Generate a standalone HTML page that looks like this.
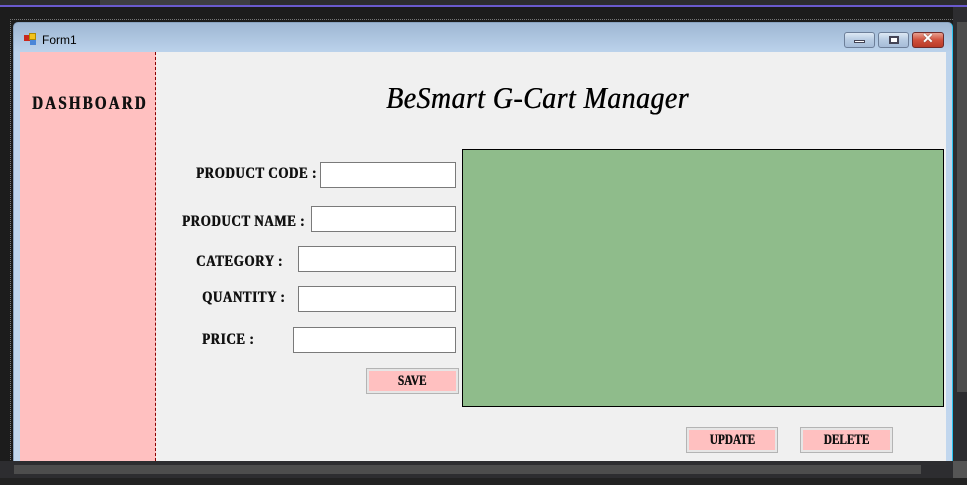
<!DOCTYPE html>
<html><head><meta charset="utf-8">
<style>
*{margin:0;padding:0;box-sizing:border-box}
body{width:967px;height:485px;background:#1c1c1c;position:relative;overflow:hidden;font-family:"Liberation Sans",sans-serif}
.a{position:absolute}
.lbl{position:absolute;font-family:"Liberation Serif",serif;font-weight:bold;font-size:13px;color:#111;transform:scaleY(1.25);transform-origin:left top;white-space:nowrap;letter-spacing:0.6px;text-shadow:0.5px 0 0 #111}
.inp{position:absolute;background:#fff;border:1px solid #7a7a7a}
.btn{position:absolute;border:1px solid #b4b4b4;background:#e6e6e6;padding:2px}
.btn div{background:#ffc0c0;width:100%;height:100%;text-align:center;font-family:"Liberation Serif",serif;font-weight:bold;font-size:15px;line-height:20px;color:#111}
.btn span{display:inline-block;transform:scaleX(0.75);text-shadow:0.5px 0 0 #111}
.cb{position:absolute;top:32px;height:16px;border:1px solid #6d7f99;border-radius:3px;background:linear-gradient(#dde8f4,#b7cbe2 50%,#a6bcd8)}
</style></head><body>
<div class="a" style="left:0;top:0;width:967px;height:5px;background:#2d2d30"></div>
<div class="a" style="left:100px;top:0;width:150px;height:5px;background:#3e3e42"></div>
<div class="a" style="left:0;top:5px;width:967px;height:2px;background:#6a5acd"></div>
<div class="a" style="left:10px;top:19px;width:943px;height:445px;border-top:1px dotted #777;border-left:1px dotted #777"></div>
<div class="a" style="left:13px;top:22px;width:940px;height:440px;background:linear-gradient(#9fb7d3,#bcd3ec 30px,#c2d7ee);border:1px solid #8aa3c0;border-radius:5px 5px 0 0;border-right:1px solid #2ac4f0"></div>
<div class="a" style="left:24px;top:35px;width:7px;height:6px;background:#c9281c"></div>
<div class="a" style="left:29px;top:33px;width:7px;height:7px;background:#f3c21b;border:1px solid #b08a00"></div>
<div class="a" style="left:30px;top:40px;width:6px;height:5px;background:#4a86d8"></div>
<div class="a" style="left:42px;top:33px;font-size:12px;color:#000">Form1</div>
<div class="cb" style="left:844px;width:31px"><div class="a" style="left:9px;top:7px;width:11px;height:3px;background:#fff;border:1px solid #445"></div></div>
<div class="cb" style="left:878px;width:31px"><div class="a" style="left:10px;top:3px;width:10px;height:8px;border:2px solid #445;background:#fff"></div></div>
<div class="cb" style="left:912px;width:32px;background:linear-gradient(#e8a090,#d0503c 50%,#b83a28);border-color:#6e2a2a"><div class="a" style="left:9px;top:-3px;color:#fff;font-weight:bold;font-size:14px;text-shadow:0 0 1px #333">✕</div></div>
<div class="a" style="left:20px;top:52px;width:926px;height:409px;background:#f0f0f0"></div>
<div class="a" style="left:20px;top:52px;width:136px;height:409px;background:#ffc0c0;border-right:1px dashed #8b0000"></div>
<div class="lbl" style="left:32px;top:94px;font-size:15px;letter-spacing:2.2px">DASHBOARD</div>
<div class="a" style="left:386px;top:80px;font-family:'Liberation Serif',cursive;font-style:italic;font-size:31px;color:#000;letter-spacing:0.5px;transform:scaleX(0.9);transform-origin:left;text-shadow:0.5px 0 0 #000">BeSmart G-Cart Manager</div>
<div class="lbl" style="left:196px;top:163px">PRODUCT CODE :</div>
<div class="inp" style="left:320px;top:162px;width:136px;height:26px"></div>
<div class="lbl" style="left:182px;top:211px">PRODUCT NAME :</div>
<div class="inp" style="left:311px;top:206px;width:145px;height:26px"></div>
<div class="lbl" style="left:196px;top:251px">CATEGORY :</div>
<div class="inp" style="left:298px;top:246px;width:158px;height:26px"></div>
<div class="lbl" style="left:202px;top:287px">QUANTITY :</div>
<div class="inp" style="left:298px;top:286px;width:158px;height:26px"></div>
<div class="lbl" style="left:202px;top:329px">PRICE :</div>
<div class="inp" style="left:293px;top:327px;width:163px;height:26px"></div>
<div class="btn" style="left:366px;top:368px;width:93px;height:26px"><div><span>SAVE</span></div></div>
<div class="a" style="left:462px;top:149px;width:482px;height:258px;background:#8fbc8b;border:1px solid #000"></div>
<div class="btn" style="left:686px;top:427px;width:92px;height:26px"><div><span>UPDATE</span></div></div>
<div class="btn" style="left:800px;top:427px;width:93px;height:26px"><div><span>DELETE</span></div></div>
<div class="a" style="left:953px;top:7px;width:14px;height:454px;background:#2d2d30"></div>
<div class="a" style="left:957px;top:22px;width:10px;height:370px;background:#4d4d4d"></div>
<div class="a" style="left:0;top:461px;width:967px;height:17px;background:#2d2d30"></div>
<div class="a" style="left:14px;top:465px;width:907px;height:9px;background:#4d4d4d"></div>
<div class="a" style="left:953px;top:461px;width:14px;height:17px;background:#555"></div>
<div class="a" style="left:0;top:478px;width:967px;height:7px;background:#222"></div>
</body></html>
